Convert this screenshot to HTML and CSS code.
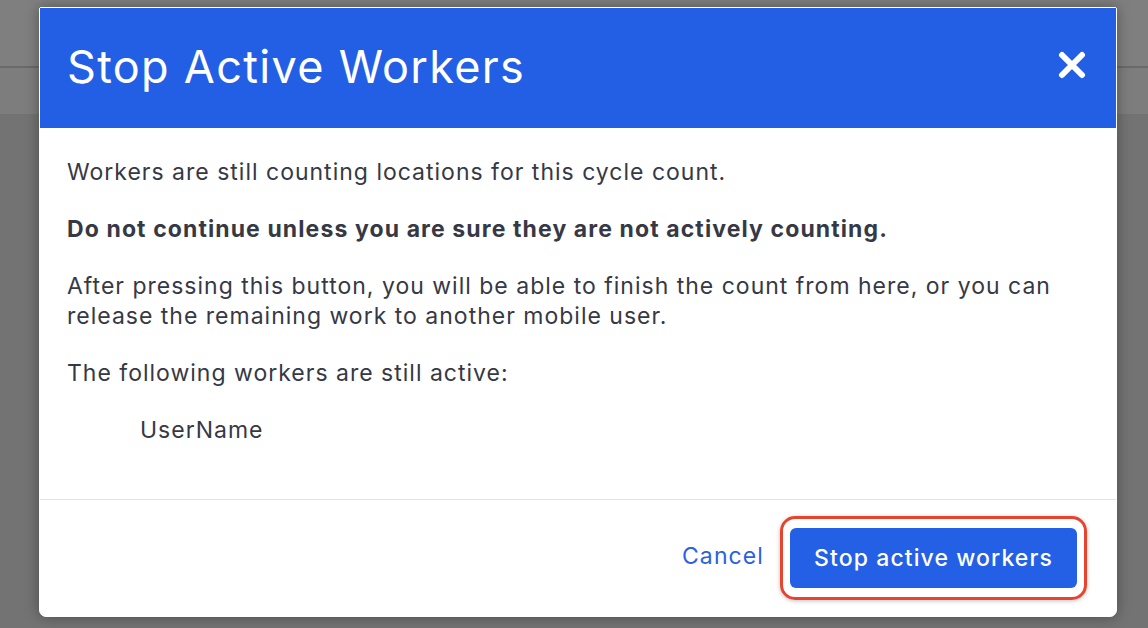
FILE: index.html
```html
<!DOCTYPE html>
<html>
<head>
<meta charset="utf-8">
<link rel="stylesheet" href="styles.css">
</head>
<body>
<div class="page">
  <div class="topbar"></div>
  <div class="subbar"></div>
  <div class="content"></div>
</div>
<div class="modal">
  <div class="modal-header">
    <h1 class="modal-title">Stop Active Workers</h1>
    <button class="close" aria-label="Close">
      <svg width="28" height="28" viewBox="0 0 28 28"><path d="M4 4 L24 24 M24 4 L4 24" stroke="#fff" stroke-width="6" stroke-linecap="round"/></svg>
    </button>
  </div>
  <div class="modal-body">
    <p>Workers are still counting locations for this cycle count.</p>
    <p class="strong">Do not continue unless you are sure they are not actively counting.</p>
    <p>After pressing this button, you will be able to finish the count from here, or you can release the remaining work to another mobile user.</p>
    <p>The following workers are still active:</p>
    <ul class="workers">
      <li>UserName</li>
    </ul>
  </div>
  <div class="modal-footer">
    <a class="cancel" href="#">Cancel</a>
    <div class="highlight">
      <button class="primary">Stop active workers</button>
    </div>
  </div>
</div>
</body>
</html>
```
FILE: styles.css
```css
* { box-sizing: border-box; }
html, body { margin: 0; padding: 0; }
body {
  width: 1148px;
  height: 628px;
  overflow: hidden;
  background: #747474;
  font-family: Inter, "Noto Sans", sans-serif;
  position: relative;
}
.page { display: flex; flex-direction: column; height: 100%; }
.topbar { height: 68px; background: #7f7f7f; border-bottom: 2px solid #6a6a6a; }
.subbar { height: 46px; background: #7d7d7d; }
.content { flex: 1; background: #737373; }

.modal {
  position: absolute;
  left: 39px;
  top: 7px;
  width: 1078px;
  height: 610px;
  background: #fff;
  border: 1px solid #fff;
  border-radius: 2px 2px 7px 7px;
  box-shadow: 0 0 14px rgba(0,0,0,0.35);
  display: flex;
  flex-direction: column;
}
.modal-header {
  height: 120px;
  background: #235fe5;
  display: flex;
  align-items: center;
  justify-content: space-between;
  padding: 0 30px 0 27px;
}
.modal-title {
  margin: 0;
  color: #fff;
  font-weight: 400;
  font-size: 45px;
  letter-spacing: 1.3px;
  padding-bottom: 4px;
}
.close {
  background: none;
  border: 0;
  padding: 0;
  width: 28px;
  height: 28px;
  margin-bottom: 6px;
  display: flex;
}
.modal-body {
  flex: 1;
  padding: 29px 27px 0 27px;
  color: #363945;
  font-size: 23px;
  letter-spacing: 1px;
  line-height: 30px;
  border-bottom: 1px solid #e4e4e4;
}
.modal-body p { margin: 0 0 27px 0; }
.modal-body .strong { font-weight: 700; letter-spacing: 1.1px; }
.workers { list-style: none; margin: 0; padding-left: 73px; }

.modal-footer {
  height: 116px;
  display: flex;
  align-items: center;
  justify-content: flex-end;
  padding: 0 29px 0 0;
  gap: 16px;
}
.cancel {
  color: #2a62dd;
  font-size: 23px;
  letter-spacing: 1.1px;
  text-decoration: none;
  margin-bottom: 4px;
}
.highlight {
  border: 3px solid #e5452f;
  border-radius: 15px;
  padding: 9px 7px;
  box-shadow: 0 1px 4px rgba(0,0,0,0.25);
  display: flex;
}
.primary {
  background: #2360e5;
  color: #fff;
  border: 0;
  border-radius: 6px;
  width: 287px;
  height: 60px;
  font-family: Inter, "Noto Sans", sans-serif;
  font-size: 23px;
  letter-spacing: 1.1px;
  font-weight: 500;
  padding: 0;
}
```
